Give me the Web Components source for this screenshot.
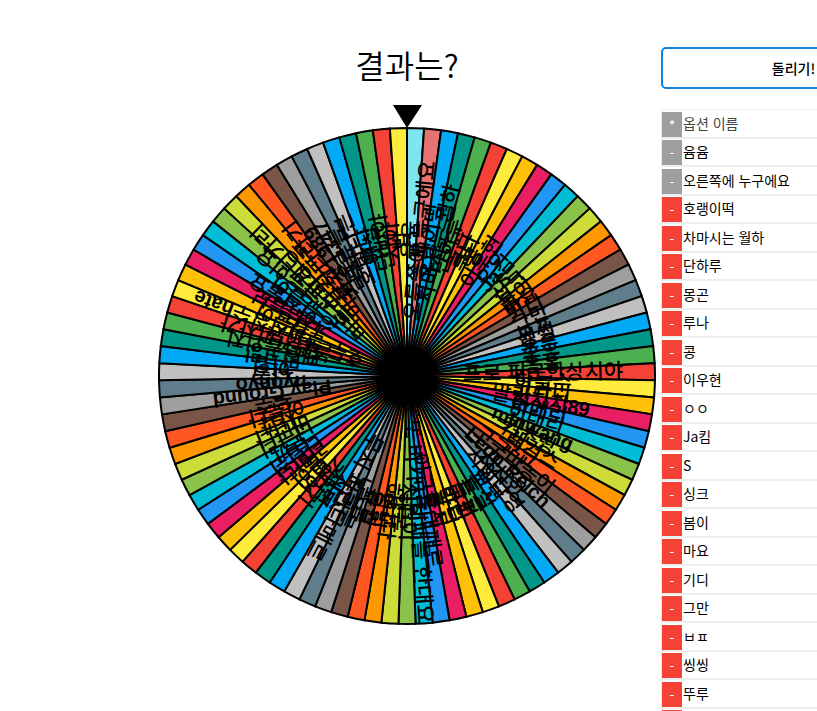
<!DOCTYPE html>
<html lang="ko">
<head>
<meta charset="utf-8">
<meta name="viewport" content="width=device-width, initial-scale=1">
<title>결과는?</title>
<style>
body {
    margin: 0;
    overflow: hidden;
    background: #fff;
    color: #000;
    font: 14px/20px "Noto Sans CJK KR", sans-serif;
}
</style>
</head>
<body>
<roulette-app>
    <result-title slot="stage">결과는?</result-title>
    <prize-wheel slot="stage"></prize-wheel>
    <spin-button slot="panel">돌리기!</spin-button>
    <option-list slot="panel"></option-list>
</roulette-app>

<script>
// Names in wheel order, clockwise from the pointer
const names = [
    '윰윰', '오른쪽에 누구에요', '호랭이떡', '차마시는 월하', '단하루', '몽곤', '루나',
    '콩', '이우현', 'ㅇㅇ', 'Ja킴', 'S', '싱크', '봄이', '마요', '기디', '그만', 'ㅂㅍ',
    '씽씽', '뚜루', '우유', '홍홍', '프로 피곤한상치야', '하늘수', '고라니', '말랑치치89',
    '아메리', '이태리', 'minwang', '기초땅', '크래커스', '코코', '고구마농이', 'Leon Reich',
    '시시한', '사이다영', '뽀또', '몽실', '특급', '들판', '바람', '달님', '홍시', '이구름대패르',
    '또또 바가지대패를 한대요', '시월이', '행복', '하나다', '별빛', '유월', '봄봄', '노을른',
    '무지 파란다메르', '지수', '새벽', '기러기', '연어', '별이', '라마다', '다람쥐', '토끼',
    '너구리', '바나나', '사과', '이루다', '우주', 'Play Ground', 'nyonyo', '냐옹', '이힝',
    '망고맛', '팬더곰의지', '볼빨간피자가', '호두 풀피자장수hate', '흰둥이', '나무늘보', '강아지풀요',
    '구름이', '초코우유이요', '미트스파게티가리', '딸기우유', '이상한나라기', '최강1989', '김수1347',
    '푸른들', '호랑나븐', '바다', '햇살', '단비야', '시아', '밤'
];

const palette = [
    '#03a9f4', '#009688', '#4caf50', '#f44336', '#ffeb3b', '#ffc107', '#e91e63', '#2196f3',
    '#00bcd4', '#8bc34a', '#cddc39', '#ff9800', '#ff5722', '#795548', '#9e9e9e', '#607d8b',
    '#c0c0c0'
];

// The two pinned options have their own colours; the green option after 54 was removed
function colorOf(i) {
    if (i === 0) return '#80e5f0';
    if (i === 1) return '#e57373';
    return palette[(i - 2 + (i > 54 ? 1 : 0)) % palette.length];
}

class RouletteApp extends HTMLElement {
    constructor() {
        super();
        this.attachShadow({mode: 'open'}).innerHTML = `
            <style>
            :host {
                display: grid;
                grid-template-columns: minmax(155px, 1fr) 504px minmax(266px, 1fr);
                column-gap: 1px;
                margin-left: -1px;
                height: 100vh;
                overflow: hidden;
            }
            main {
                grid-column: 2;
                display: flex;
                flex-direction: column;
                align-items: center;
                padding-top: 40px;
            }
            aside {
                display: flex;
                flex-direction: column;
                gap: 20px;
                margin-left: 1px;
                padding-top: 47px;
            }
            </style>
            <main><slot name="stage"></slot></main>
            <aside><slot name="panel"></slot></aside>
        `;
    }
}

class ResultTitle extends HTMLElement {
    constructor() {
        super();
        this.attachShadow({mode: 'open'}).innerHTML = `
            <style>
            :host { display: block; }
            h1 {
                margin: 0 0 16px;
                font-size: 32px;
                font-weight: 350;
                line-height: 48px;
            }
            </style>
            <h1><slot></slot></h1>
        `;
    }
}

class PrizeWheel extends HTMLElement {
    constructor() {
        super();
        const r = 248;
        const step = 360 / names.length;
        const point = (deg) => {
            const a = (deg - 90) * Math.PI / 180;
            return `${(r * Math.cos(a)).toFixed(2)} ${(r * Math.sin(a)).toFixed(2)}`;
        };
        const slices = names.map((name, i) =>
            `<path fill="${colorOf(i)}" d="M0 0L${point(i * step)}A${r} ${r} 0 0 1 ${point((i + 1) * step)}Z"/>`
        ).join('');
        const labels = names.map((name, i) => {
            const label = name.replace(/[A-Za-z0-9]+/g, '<tspan>$&</tspan>');
            return `<text x="136" y="6" transform="rotate(${((i + 0.5) * step - 90).toFixed(2)})">${label}</text>`;
        }).join('');

        this.attachShadow({mode: 'open'}).innerHTML = `
            <style>
            :host { display: block; }
            svg {
                display: block;
                width: 500px;
                height: 522px;
            }
            path {
                stroke: #000;
                stroke-width: 2px;
            }
            text {
                font: 500 21px "Noto Sans CJK KR", sans-serif;
                text-anchor: middle;
            }
            tspan { font: bold 20px "Liberation Sans", sans-serif; }
            </style>
            <svg viewBox="-250 -272 500 522" role="img" aria-label="룰렛">
                ${slices}
                ${labels}
                <polygon points="-14,-271 15,-271 0,-248"/>
            </svg>
        `;
    }
}

class SpinButton extends HTMLElement {
    constructor() {
        super();
        this.attachShadow({mode: 'open'}).innerHTML = `
            <style>
            :host { display: block; }
            button {
                width: 100%;
                height: 42px;
                border: 2px solid #0f83db;
                border-radius: 5px;
                background: #fff;
                color: #000;
                font: inherit;
                font-weight: 500;
            }
            </style>
            <button type="button"><slot></slot></button>
        `;
    }
}

class OptionList extends HTMLElement {
    constructor() {
        super();
        const rows = names.slice(0, 21).map((name, i) => `
            <li>
                <button type="button" class="${i < 2 ? 'pinned' : ''}">-</button>
                <span>${name}</span>
            </li>`).join('');

        this.attachShadow({mode: 'open'}).innerHTML = `
            <style>
            :host { display: block; }
            ul {
                margin: 0;
                padding: 0;
                list-style: none;
                border-top: 1px solid #eee;
                border-left: 1px solid #eee;
            }
            li {
                display: flex;
                align-items: flex-start;
                gap: 1px;
                height: 25px;
                padding-top: 1px;
                border-bottom: 2px solid #eee;
                line-height: 22px;
            }
            li:nth-child(odd) { padding-top: 2px; }
            button {
                width: 20px;
                height: 25px;
                padding: 0;
                border: 0;
                background: #f44336;
                color: #fff;
                font: inherit;
            }
            .pinned { background: #9e9e9e; }
            input {
                flex: 1;
                min-width: 0;
                height: 22px;
                padding: 0;
                border: 0;
                outline: 0;
                background: none;
                color: inherit;
                font: inherit;
            }
            input::placeholder {
                color: #444;
                opacity: 1;
            }
            </style>
            <ul>
                <li>
                    <button type="button" class="pinned">*</button>
                    <input type="text" placeholder="옵션 이름" aria-label="옵션 이름">
                </li>
                ${rows}
            </ul>
        `;
    }
}

customElements.define('roulette-app', RouletteApp);
customElements.define('result-title', ResultTitle);
customElements.define('prize-wheel', PrizeWheel);
customElements.define('spin-button', SpinButton);
customElements.define('option-list', OptionList);
</script>
</body>
</html>
